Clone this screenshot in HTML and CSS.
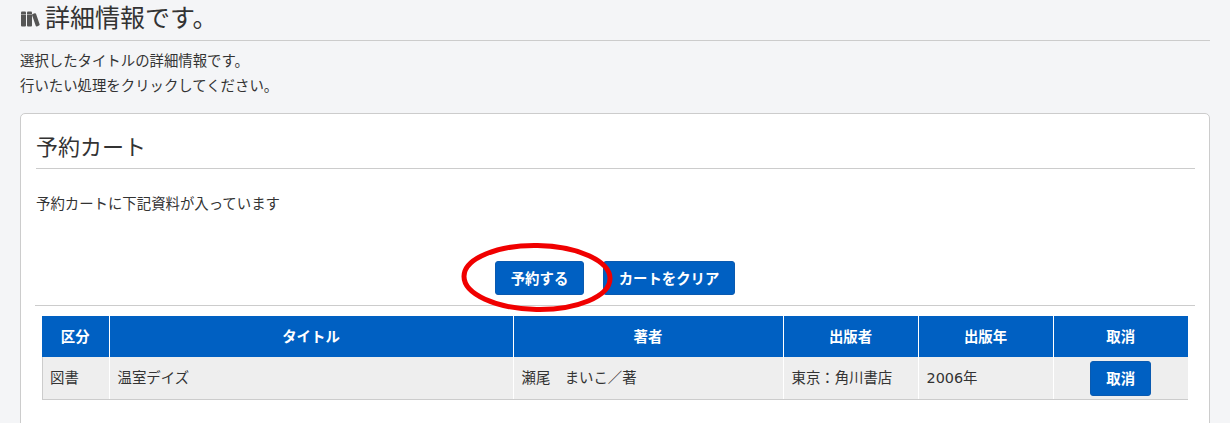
FILE: index.html
```html
<!DOCTYPE html>
<html lang="ja">
<head>
    <meta charset="UTF-8">
    <title>詳細情報です。</title>
    <link rel="stylesheet" href="styles.css">
</head>
<body>
    <div class="container">
        <h1 class="page-title">
            <svg class="title-icon" viewBox="0 0 20 16" width="20" height="16">
                <path d="M1 1.500q0-1 1-1h3q1 0 1 1v13q0 1-1 1H2q-1 0-1-1z"/>
                <path d="M7 1.500q0-1 1-1h3q1 0 1 1v13q0 1-1 1H8q-1 0-1-1z"/>
                <path d="M12.700 3l2-.8q1-.3 1.300.6l3.600 10.500q.3.900-.6 1.300l-2 .8q-1 .3-1.300-.6L12.100 4.300q-.3-.9.600-1.300z"/>
                <path class="title-icon-band" d="M1 3.500h5M7 3.500h5"/>
            </svg>
            詳細情報です。
        </h1>
        <p class="intro">選択したタイトルの詳細情報です。</p>
        <p class="intro">行いたい処理をクリックしてください。</p>

        <div class="card">
            <h2 class="card-title">予約カート</h2>
            <p class="card-text">予約カートに下記資料が入っています</p>

            <div class="actions">
                <button class="btn btn-reserve">予約する</button>
                <button class="btn btn-clear">カートをクリア</button>
                <svg class="circle-mark" viewBox="0 0 153 71" width="153" height="71">
                    <ellipse cx="76" cy="35.500" rx="73" ry="32" transform="rotate(1 76 35.500)"/>
                </svg>
            </div>

            <table class="cart-table">
                <thead>
                    <tr>
                        <th class="col-type">区分</th>
                        <th class="col-title">タイトル</th>
                        <th class="col-author">著者</th>
                        <th class="col-publisher">出版者</th>
                        <th class="col-year">出版年</th>
                        <th class="col-cancel">取消</th>
                    </tr>
                </thead>
                <tbody>
                    <tr>
                        <td>図書</td>
                        <td>温室デイズ</td>
                        <td>瀬尾　まいこ／著</td>
                        <td>東京：角川書店</td>
                        <td class="cell-year">2006年</td>
                        <td class="cell-cancel"><button class="btn btn-cancel">取消</button></td>
                    </tr>
                </tbody>
            </table>
        </div>
    </div>
</body>
</html>
```

FILE: styles.css
```css
html, body {
    height: 423px;
    overflow: hidden;
}
body {
    margin: 0;
    background-color: #f4f5f7;
    color: #333;
    font-family: "Liberation Sans", Arial, "Noto Sans CJK JP", sans-serif;
    font-size: 14.4px;
}
.container {
    padding: 0 20px;
}
.page-title {
    display: flex;
    align-items: center;
    gap: 5px;
    height: 41px;
    margin: 0;
    padding-bottom: 3px;
    box-sizing: border-box;
    border-bottom: 1px solid #ccc;
    font-size: 25px;
    font-weight: normal;
    line-height: 1;
}
.title-icon {
    fill: #555;
}
.title-icon-band {
    fill: none;
    stroke: #999;
    stroke-width: 1;
}
.intro {
    margin: 0;
    line-height: 25px;
}
.page-title + .intro {
    margin-top: 8px;
}
.card {
    margin-top: 14px;
    padding: 15px 15px 40px;
    background: #fff;
    border: 1px solid #ccc;
    border-radius: 5px;
}
.card-title {
    margin: 0 -1px 0 0;
    padding: 3px 0 4px;
    border-bottom: 1px solid #ccc;
    font-size: 22px;
    font-weight: normal;
    line-height: 32px;
}
.card-text {
    margin: 25px 0 0;
    line-height: 20px;
}
.actions {
    position: relative;
    display: flex;
    justify-content: center;
    gap: 19px;
    width: 1160px;
    margin: 47px 0 0 -1px;
    padding-bottom: 10px;
    border-bottom: 1px solid #ccc;
}
.btn {
    padding: 0 0 2px;
    background-color: #0060c2;
    color: #fff;
    border: 1px solid #0a5ab0;
    border-radius: 3px;
    font-family: inherit;
    font-size: 14.4px;
    font-weight: bold;
    cursor: pointer;
}
.btn-reserve {
    width: 89px;
    height: 34px;
}
.btn-clear {
    width: 132px;
    height: 34px;
}
.circle-mark {
    position: absolute;
    left: 426px;
    top: -19px;
    fill: none;
    stroke: #f00000;
    stroke-width: 5;
}
.cart-table {
    width: 1146px;
    margin: 10px 0 0 6px;
    border-collapse: collapse;
    table-layout: fixed;
}
.cart-table th {
    box-sizing: border-box;
    height: 41px;
    padding: 0 0 2px;
    background-color: #0060c2;
    color: #fff;
    border-left: 1px solid #fff;
    border-right: 1px solid #fff;
    font-size: 14.4px;
}
.cart-table td {
    box-sizing: border-box;
    height: 42px;
    padding: 0 8px 2px;
    background-color: #eee;
    border-left: 1px solid #fff;
    border-right: 1px solid #fff;
    border-bottom: 1px solid #ccc;
}
.cart-table th:first-child,
.cart-table td:first-child {
    border-left: none;
}
.cart-table td:first-child {
    box-shadow: inset 1px 0 0 #ccc;
}
.cart-table th:last-child,
.cart-table td:last-child {
    border-right: none;
}
.col-type { width: 67px; }
.col-title { width: 404px; }
.col-author { width: 270px; }
.col-publisher { width: 135px; }
.col-year { width: 135px; }
.col-cancel { width: 135px; }
.cart-table td.cell-year {
    font-family: "DejaVu Sans", "Noto Sans CJK JP", sans-serif;
}
.cart-table td.cell-cancel {
    padding: 1px 0 0;
    text-align: center;
}
.btn-cancel {
    width: 61px;
    height: 35px;
    vertical-align: middle;
}
```
